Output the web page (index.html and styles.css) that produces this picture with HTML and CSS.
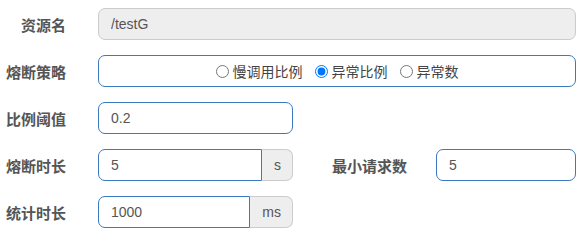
FILE: index.html
```html
<!DOCTYPE html>
<html>
<head>
<meta charset="utf-8">
<link rel="stylesheet" href="styles.css">
</head>
<body>
<div class="form">
  <div class="row">
    <label class="lbl">资源名</label>
    <input class="inp inp-disabled grow" type="text" value="/testG" readonly>
  </div>
  <div class="row">
    <label class="lbl">熔断策略</label>
    <div class="radio-box grow">
      <label class="opt"><input type="radio" name="grade"><span>慢调用比例</span></label>
      <label class="opt"><input type="radio" name="grade" checked><span>异常比例</span></label>
      <label class="opt"><input type="radio" name="grade"><span>异常数</span></label>
    </div>
  </div>
  <div class="row">
    <label class="lbl">比例阈值</label>
    <input class="inp inp-blue small" type="text" value="0.2">
  </div>
  <div class="row">
    <label class="lbl">熔断时长</label>
    <div class="group small">
      <input class="inp inp-blue grp-inp" type="text" value="5">
      <span class="addon">s</span>
    </div>
    <label class="lbl lbl-inline">最小请求数</label>
    <input class="inp inp-blue grow" type="text" value="5">
  </div>
  <div class="row">
    <label class="lbl">统计时长</label>
    <div class="group small">
      <input class="inp inp-blue grp-inp" type="text" value="1000">
      <span class="addon">ms</span>
    </div>
  </div>
</div>
</body>
</html>
```

FILE: styles.css
```css
html, body {
  margin: 0;
  padding: 0;
  background: #fff;
}
.form {
  padding: 8px 11px 0 0;
  display: flex;
  flex-direction: column;
  gap: 15px;
  font-family: "Liberation Sans", "Noto Sans CJK SC", sans-serif;
}
.row {
  display: flex;
  align-items: center;
  height: 32px;
}
.lbl {
  width: 66px;
  margin-right: 32px;
  text-align: right;
  font-size: 15px;
  font-weight: bold;
  color: #555;
  white-space: nowrap;
  flex: none;
}
.lbl-inline {
  width: auto;
  margin-left: 39px;
  margin-right: 29px;
}
.grow {
  flex: 1;
  min-width: 0;
}
.small {
  width: 195px;
  flex: none;
}
.inp {
  box-sizing: border-box;
  height: 32px;
  padding: 0 12px;
  font-family: "Liberation Sans", sans-serif;
  font-size: 14px;
  color: #555;
  border-radius: 7px;
  outline: none;
  margin: 0;
}
.inp-disabled {
  background: #eee;
  border: 1px solid #ccc;
}
.inp-blue {
  background: #fff;
  border: 1px solid #3a7abd;
}
.radio-box {
  box-sizing: border-box;
  height: 32px;
  border: 1px solid #3a7abd;
  border-radius: 7px;
  display: flex;
  align-items: center;
  justify-content: center;
  gap: 12px;
  font-family: "Noto Sans CJK SC", sans-serif;
  font-size: 14px;
  color: #444;
}
.opt {
  display: flex;
  align-items: center;
}
.opt input {
  margin: 0 4px 0 0;
  width: 13px;
  height: 13px;
}
.group {
  display: flex;
  height: 32px;
}
.grp-inp {
  flex: 1;
  min-width: 0;
  border-radius: 7px 0 0 7px;
}
.addon {
  box-sizing: border-box;
  height: 32px;
  padding: 0 11px 0 12px;
  display: flex;
  align-items: center;
  background: #eee;
  border: 1px solid #ccc;
  border-left: 0;
  border-radius: 0 7px 7px 0;
  font-family: "Liberation Sans", sans-serif;
  font-size: 14px;
  color: #555;
}
```
